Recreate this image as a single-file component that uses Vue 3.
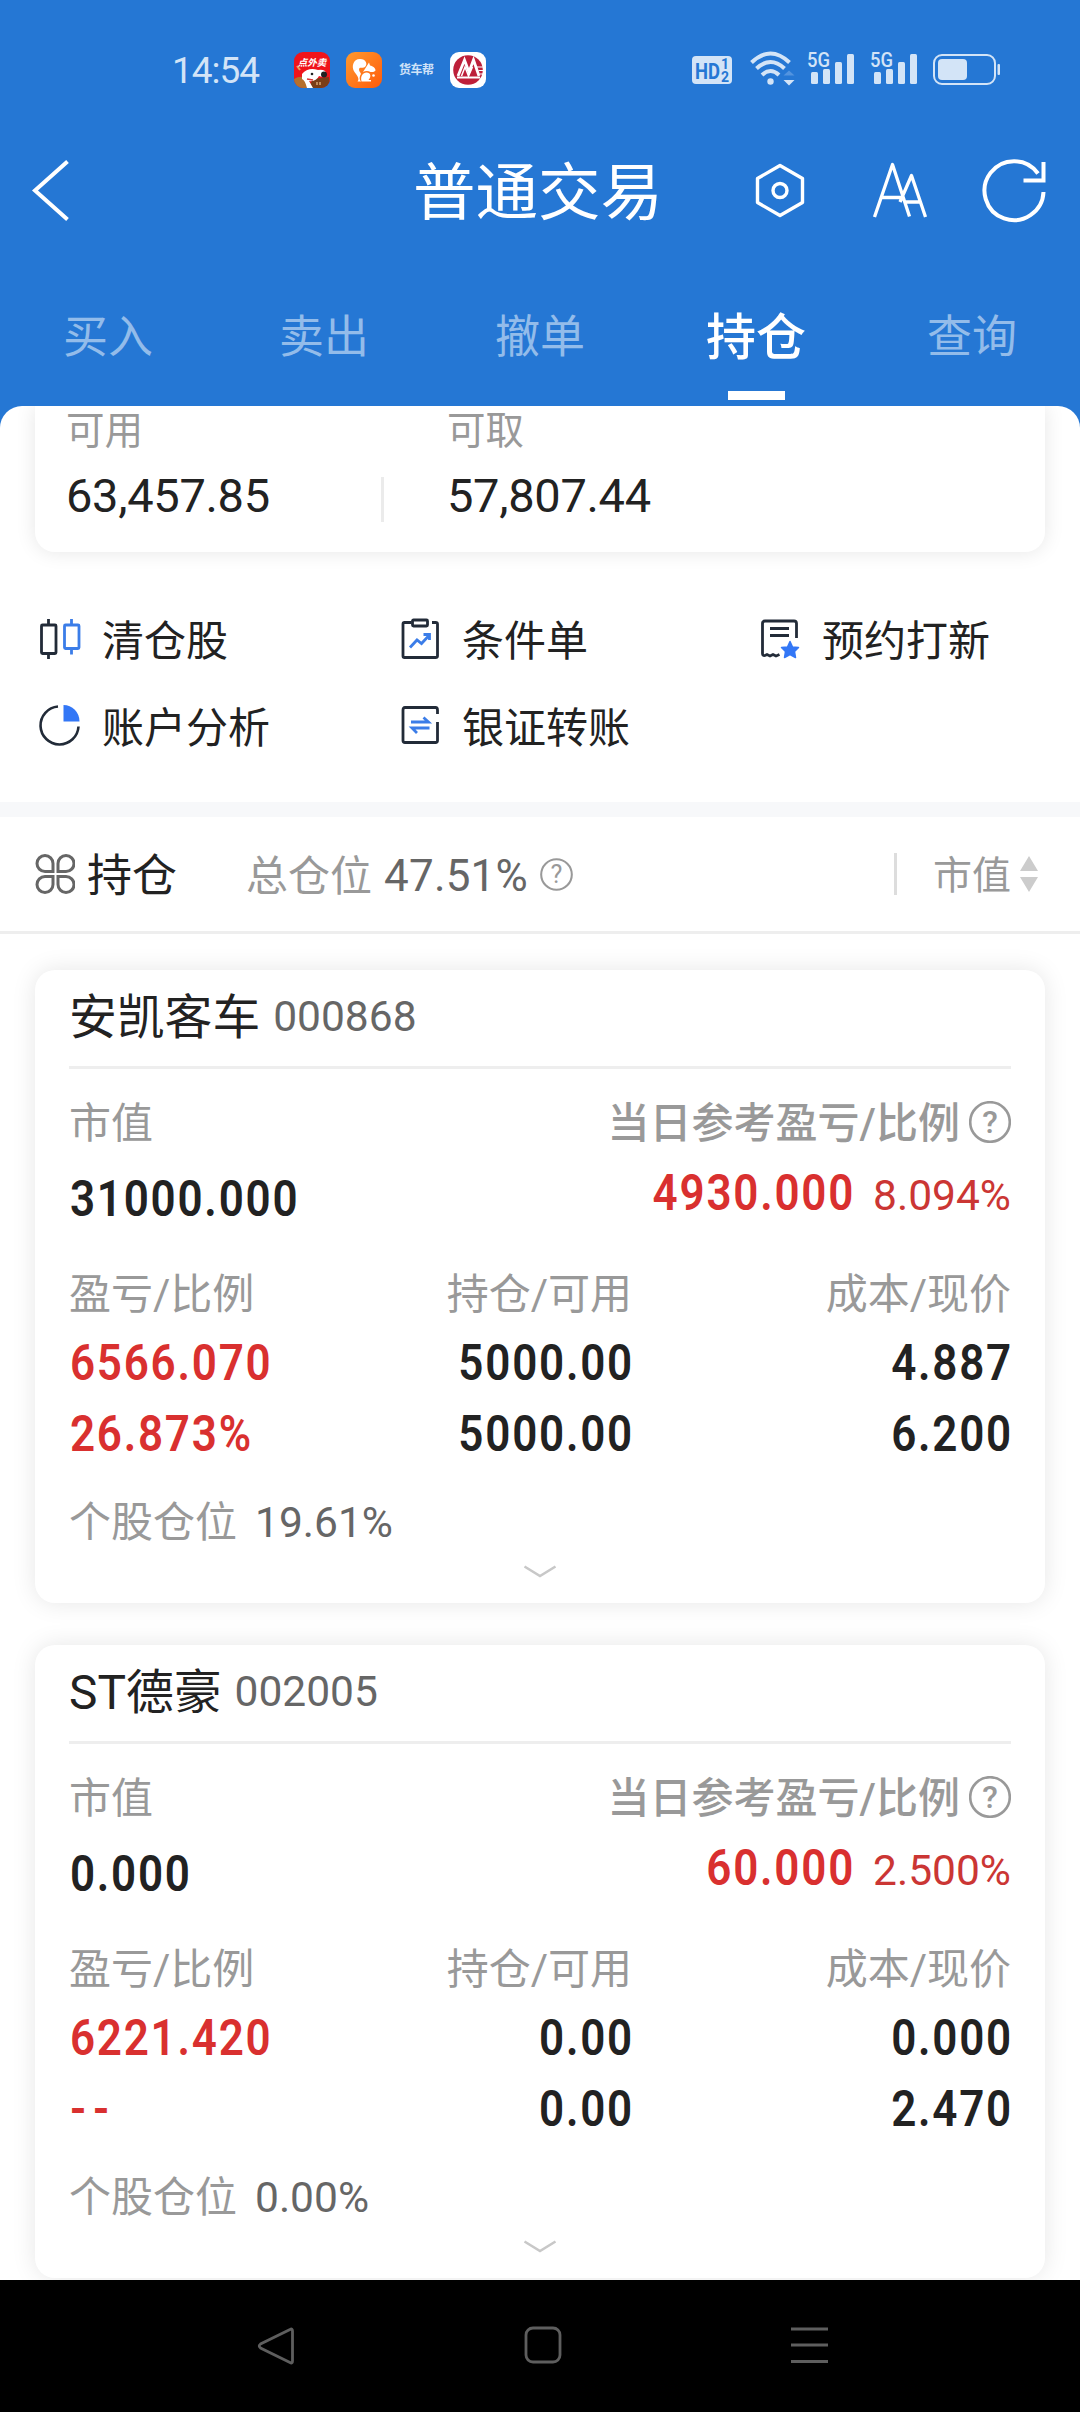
<script setup>
const tabs = ['买入', '卖出', '撤单', '持仓', '查询']
const activeTab = '持仓'

const tools = [
  { name: '清仓股', icon: 'candle' },
  { name: '条件单', icon: 'clipboard' },
  { name: '预约打新', icon: 'reserve' },
  { name: '账户分析', icon: 'pie' },
  { name: '银证转账', icon: 'transfer' },
]

const holdings = [
  {
    name: '安凯客车', code: '000868', value: '31000.000',
    day: '4930.000', dayRate: '8.094%',
    profit: '6566.070', profitRate: '26.873%',
    amount: '5000.00', usable: '5000.00',
    cost: '4.887', price: '6.200', weight: '19.61%',
  },
  {
    name: 'ST德豪', code: '002005', value: '0.000',
    day: '60.000', dayRate: '2.500%',
    profit: '6221.420', profitRate: '--',
    amount: '0.00', usable: '0.00',
    cost: '0.000', price: '2.470', weight: '0.00%',
  },
]
</script>

<template>
  <div class="screen">
    <header class="top">
      <div class="status">
        <span class="clock">14:54</span>
        <div class="apps">
          <svg width="36" height="36" viewBox="0 0 36 36">
            <defs><clipPath id="jd"><rect width="36" height="36" rx="9" /></clipPath></defs>
            <g clip-path="url(#jd)">
              <rect width="36" height="36" fill="#f0141b" />
              <path d="M0 27Q8 22 14 28L20 36H0Z" fill="#b5702c" />
              <path d="M18 27L35 25L36 36H16Z" fill="#7a3d17" />
              <path d="M3 14l3 4" stroke="#e9a25c" stroke-width="2" />
              <path d="M8 22Q14 15 24 18Q32 17 32 22Q30 26 25 24Q22 30 15 29L19 36H13Q11 28 8 27Z" fill="#fff" />
              <circle cx="30" cy="22.500" r="3" fill="#222" />
              <circle cx="18" cy="22" r="1.300" fill="#222" />
              <path d="M13 27l6 1" stroke="#d33" stroke-width="1.500" />
              <path d="M23 30v3M26 30v3" stroke="#efc08a" stroke-width="1.200" />
              <text x="18" y="13.500" text-anchor="middle" class="tiny">点外卖</text>
            </g>
          </svg>
          <svg width="36" height="36" viewBox="0 0 36 36">
            <defs><linearGradient id="uc" x1="0" y1="0" x2="1" y2="1"><stop offset="0" stop-color="#ff9a2e" /><stop offset="1" stop-color="#ff5a0a" /></linearGradient></defs>
            <rect width="36" height="36" rx="9" fill="url(#uc)" />
            <path d="M11.500 29.500C14 27 11 23 8.500 20C5 15 7 7 14 7C20 7 22 12 19 15C17 16.500 15 15 13.500 16C12 18.500 14.500 20 15 22C13 25 13.500 28 15 29.500Z" fill="#fff" />
            <path d="M17 20L23 10.500L24 13.500C27 14 29.500 16 29.500 18.500C28 20.500 26 20 24.500 20C22 18.500 19 19 17 20Z" fill="#fff" />
            <path d="M15.500 29.500C14 24 17 20.500 20.500 20.500C25 20.500 25.500 25 22.500 28H25V29.500Z" fill="#fff" />
            <circle cx="27.500" cy="23.500" r="1.300" fill="#fff" />
          </svg>
          <span class="truck">货车帮</span>
          <svg width="36" height="36" viewBox="0 0 36 36">
            <rect width="36" height="36" rx="9" fill="#fff" />
            <circle cx="18" cy="18" r="14.800" fill="#bd1f3a" />
            <path d="M8 24L14.500 8L19 20L23.500 8L29 24" fill="none" stroke="#fff" stroke-width="2.800" />
            <path d="M11.500 24L15 15L18.500 24L22.500 15" fill="none" stroke="#fff" stroke-width="1.500" />
            <path d="M7 25.500H30" stroke="#fff" stroke-width="2" />
            <path d="M27 15h7M28.500 18.500h6M29.500 22h5" stroke="#fff" stroke-width="1.200" />
          </svg>
        </div>
        <svg class="signals" width="312" height="40" viewBox="690 48 312 40" fill="#d3e4f7">
          <rect x="692" y="56" width="40" height="28" rx="4" />
          <text x="695" y="78.500" class="hd" textLength="25" lengthAdjust="spacingAndGlyphs">HD</text>
          <text x="721" y="68.500" class="hdn">1</text>
          <text x="721" y="81.500" class="hdn">2</text>
          <g fill="none" stroke="#d3e4f7" stroke-width="4">
            <path d="M751.500 62.500Q770.500 44.500 789.500 62.500" />
            <path d="M756.500 68.500Q770.500 55.500 784.500 68.500" />
            <path d="M762 75Q770.500 67 779 75" />
          </g>
          <circle cx="770.500" cy="81.500" r="3.200" />
          <path d="M783.500 75.500L789 70.500L794.500 75.500Z" fill="#5394df" />
          <path d="M783.500 80L794.500 80L789 85.500Z" />
          <g v-for="x in [807.500, 870.500]" :key="x" :transform="`translate(${x} 0)`">
            <text x="-0.500" y="67" class="fiveg" textLength="23" lengthAdjust="spacingAndGlyphs">5G</text>
            <rect x="3.500" y="72" width="7" height="12" rx="1.500" />
            <rect x="15.500" y="69" width="7" height="15" rx="1.500" />
            <rect x="27.500" y="62" width="7" height="22" rx="1.500" />
            <rect x="39.500" y="54" width="7" height="30" rx="1.500" />
          </g>
          <rect x="934" y="55" width="61" height="29" rx="8" fill="none" stroke="#d3e4f7" stroke-width="2" />
          <rect x="938" y="59" width="29" height="21" rx="4" />
          <rect x="997.500" y="64" width="2.500" height="11" rx="1" />
        </svg>
      </div>

      <div class="titlebar">
        <svg width="40" height="64" viewBox="30 158 40 64" fill="none" stroke="#fff" stroke-width="4"><path d="M67.500 161.500L35 190.500L67.500 219.500" /></svg>
        <h1>普通交易</h1>
        <svg class="actions" width="300" height="70" viewBox="750 155 300 70" fill="none" stroke="#fff" stroke-width="3.400">
          <path d="M780 165.500L802.500 178.500V202.500L780 215.500L757.500 202.500V178.500Z" stroke-linejoin="round" />
          <circle cx="780" cy="190.500" r="7" />
          <path d="M874.500 217L892.500 164.500L909.500 216.500M881 197.500H903M900 202L911.500 175.500L925.500 217M906 202H920.500" stroke-width="3.300" stroke-linejoin="round" />
          <path d="M1043.500 192A29.500 29.500 0 1 1 1038 173.500" stroke-width="4" />
          <path d="M1043.500 162V180.500H1023.500" stroke-width="4" />
        </svg>
      </div>

      <nav class="tabs">
        <span v-for="t in tabs" :key="t" class="tab" :class="{ on: t === activeTab }">{{ t }}</span>
      </nav>
    </header>

    <main class="sheet">
      <section class="funds">
        <div class="fund">
          <label>可用</label>
          <b>63,457.85</b>
        </div>
        <i class="rule"></i>
        <div class="fund">
          <label>可取</label>
          <b>57,807.44</b>
        </div>
      </section>

      <section class="tools">
        <div v-for="t in tools" :key="t.name" class="tool">
          <svg width="44" height="44" viewBox="0 0 44 44" fill="none" stroke="#222b38" stroke-width="2.800">
            <template v-if="t.icon === 'candle'">
              <path d="M10.500 2V8M10.500 36V42" /><rect x="3.500" y="8" width="14.500" height="28.500" rx="1" />
              <g stroke="#3b7de8"><path d="M33.500 2V8M33.500 31V37.500" /><rect x="26.500" y="8" width="14.500" height="23.500" rx="1" /></g>
            </template>
            <template v-else-if="t.icon === 'clipboard'">
              <path d="M13.500 5.500H6.500Q5 5.500 5 7V39Q5 40.500 6.500 40.500H37.500Q39.500 40.500 39.500 39V7Q39.500 5.500 37.500 5.500H34" />
              <rect x="14.500" y="3" width="15" height="6" rx="1" />
              <path d="M12 30.500L19 23L23.500 26.500L31 18.500M25.500 17.500H31.500V23" stroke="#3b7de8" />
            </template>
            <template v-else-if="t.icon === 'reserve'">
              <path d="M38.500 21V6.500Q38.500 4 36 4H7Q4.500 4 4.500 6.500V36.500Q4.500 39 7 38.500L9 37.500L12 39L15 37.500L18 39L21.500 37.500" />
              <path d="M12 11.500H31M12 18.500H31" />
              <path d="M32 24.500L34.500 30L40.500 30.500L36.500 34.500L37.500 40.500L32 37.500L26.500 40.500L27.500 34.500L23.500 30.500L29.500 30Z" fill="#3377f6" stroke="#3377f6" stroke-width="1.500" stroke-linejoin="round" />
            </template>
            <template v-else-if="t.icon === 'pie'">
              <path d="M20 2.500A19 19 0 1 0 40.500 22.500" stroke-width="2.600" />
              <path d="M25.500 1A16 16.500 0 0 1 41.500 17.500H25.500Z" fill="#3377f6" stroke="none" />
            </template>
            <template v-else>
              <path d="M39.500 10V6Q39.500 3.500 37.500 3.500H7Q5 3.500 5 6V36.500Q5 38.500 7 38.500H37.500Q39.500 38.500 39.500 36.500V18" />
              <path d="M13 18H30.500L25.500 13.500M31.500 24H14L19 29" stroke="#3b7de8" />
            </template>
          </svg>
          <span>{{ t.name }}</span>
        </div>
      </section>

      <section class="filter">
        <svg width="40" height="40" viewBox="0 0 40 40" fill="none" stroke="#666" stroke-width="3">
          <path d="M18 17.500H10A8 8 0 1 1 18 9.500ZM23 17.500V9.500A8 8 0 1 1 31 17.500ZM18 22.500V30.500A8 8 0 1 1 10 22.500ZM23 22.500H31A8 8 0 1 1 23 30.500Z" />
        </svg>
        <h2>持仓</h2>
        <span class="total">总仓位</span>
        <span class="rate">47.51%</span>
        <svg class="help" width="33" height="33" viewBox="0 0 42 42"><circle cx="21" cy="21" r="19.500" /><text x="21" y="32" text-anchor="middle">?</text></svg>
        <i class="rule"></i>
        <span class="sort">市值</span>
        <svg width="18" height="38" viewBox="0 0 18 38" fill="#ccc"><path d="M9 1L18 16H0ZM0 22H18L9 37Z" /></svg>
      </section>

      <section class="list">
        <article v-for="h in holdings" :key="h.code" class="card">
          <div class="head"><span class="name">{{ h.name }}</span><span class="code">{{ h.code }}</span></div>
          <div class="row first">
            <span class="cap">市值</span>
            <span class="cap strong">当日参考盈亏/比例<svg class="help" width="42" height="42" viewBox="0 0 42 42"><circle cx="21" cy="21" r="19.800" /><text x="21" y="32" text-anchor="middle">?</text></svg></span>
          </div>
          <div class="row worth">
            <span class="num start">{{ h.value }}</span>
            <span class="day red"><span class="num">{{ h.day }}</span><span class="pct">{{ h.dayRate }}</span></span>
          </div>
          <div class="grid">
            <span class="cap">盈亏/比例</span><span class="cap">持仓/可用</span><span class="cap">成本/现价</span>
            <span class="num start red">{{ h.profit }}</span><span class="num">{{ h.amount }}</span><span class="num">{{ h.cost }}</span>
            <span class="num start red" :class="{ dash: h.profitRate === '--' }">{{ h.profitRate }}</span><span class="num">{{ h.usable }}</span><span class="num">{{ h.price }}</span>
          </div>
          <div class="share"><span class="cap">个股仓位</span><span class="small">{{ h.weight }}</span></div>
          <svg class="more" width="34" height="14" viewBox="0 0 34 14" fill="none" stroke="#c8c8c8" stroke-width="2.600"><path d="M1.500 1.500L17 11L32.500 1.500" /></svg>
        </article>
      </section>
    </main>

    <footer class="nav">
      <svg width="38" height="40" viewBox="0 0 38 40"><path d="M33 3.500Q35.500 2 35.500 5V35Q35.500 38 33 36.500L3.500 22Q1 20 3.500 18Z" /></svg>
      <svg width="38" height="38" viewBox="0 0 38 38"><rect x="2" y="2" width="34" height="34" rx="7" /></svg>
      <svg width="38" height="38" viewBox="0 0 38 38"><path d="M1 3H38M1 19H38M1 35.500H38" /></svg>
    </footer>
  </div>
</template>

<style>
body { margin: 0; background: #fff; }
</style>

<style scoped>
.screen {
  width: 1080px;
  height: 2412px;
  display: flex;
  flex-direction: column;
  overflow: hidden;
  background: #2577d4;
  font-family: Roboto, "Noto Sans CJK SC", sans-serif;
  color: #222;
}
svg { display: block; flex: none; }
h1, h2 { margin: 0; font-weight: 400; }

.top { height: 406px; flex: none; color: #fff; }
.status { height: 92px; padding-top: 48px; box-sizing: border-box; display: flex; align-items: flex-start; }
.clock { width: 122px; margin-left: 172px; font-size: 37px; line-height: 46px; letter-spacing: -1px; color: #d3e4f7; }
.apps { display: flex; align-items: center; margin-top: 4px; width: 396px; }
.apps svg + svg { margin-left: 16px; }
.truck { width: 34px; margin: 0 17px 0 17px; font-size: 12px; line-height: 16px; font-weight: 700; white-space: nowrap; color: #cfe2f8; letter-spacing: -0.5px; }
.tiny { font-size: 9.5px; font-weight: 700; font-style: italic; fill: #fff; }
.hd { font-size: 22px; font-weight: 700; fill: #2577d4; }
.hdn { font-size: 14px; font-weight: 700; fill: #2577d4; }
.fiveg { font-size: 20px; font-weight: 500; }

.titlebar { height: 196px; display: flex; align-items: center; padding: 0 30px; }
.titlebar h1 { flex: 1; padding-left: 343px; font-size: 62.5px; line-height: 80px; margin-top: 8px; }

.tabs { display: flex; height: 118px; }
.tab { width: 216px; height: 112px; line-height: 100px; font-size: 45px; color: #93bcea; display: flex; flex-direction: column; align-items: center; }
.tab.on { font-size: 50px; font-weight: 500; color: #fff; }
.tab.on::after { content: ""; width: 57px; height: 9px; margin-top: 3px; background: #fff; }

.sheet { height: 1874px; flex: none; overflow: hidden; background: #fff; border-radius: 22px 22px 0 0; }
.funds { height: 146px; margin: 0 35px; border-radius: 0 0 20px 20px; box-shadow: 0 0 20px rgba(0, 0, 0, 0.1); display: flex; padding-left: 31px; }
.fund { width: 315px; display: flex; flex-direction: column; }
.fund label { font-size: 38.5px; line-height: 50px; color: #999; }
.fund b { font-size: 47px; line-height: 79px; font-weight: 400; letter-spacing: -0.3px; }
.funds .rule { width: 3px; height: 45px; margin: 71px 63px 0 0; background: #ebebeb; }

.tools { height: 265px; padding: 44px 0 0 38px; box-sizing: border-box; display: flex; flex-wrap: wrap; align-content: flex-start; width: 1118px; border-bottom: 15px solid #f7f8fa; }
.tool { width: 360px; height: 87px; display: flex; align-items: center; font-size: 42px; }
.tool svg { margin: -2px 20px 0 0; }
.tool span { line-height: 60px; margin-top: 4px; }

.filter { height: 117px; border-bottom: 3px solid #eee; box-sizing: border-box; padding: 0 42px 0 35px; display: flex; align-items: center; color: #999; }
.filter h2 { font-size: 45px; line-height: 60px; margin: 5px 0 0 12px; color: #222; }
.total { font-size: 42px; line-height: 60px; margin: 5px 0 0 69px; }
.rate { font-size: 44px; line-height: 60px; margin: 3px 0 0 12px; color: #666; letter-spacing: 0.2px; }
.filter .help { margin-left: 12px; }
.filter .rule { width: 3px; height: 42px; background: #ddd; margin-left: auto; }
.sort { font-size: 39px; line-height: 60px; margin: 4px 9px 0 36px; }
.help circle { fill: none; stroke: #999; stroke-width: 2.6; }
.help text { font-size: 32px; fill: #999; }

.list { padding: 36px 35px 0; display: flex; flex-direction: column; gap: 42px; }
.card { height: 633px; border-radius: 20px; box-shadow: 0 0 24px rgba(0, 0, 0, 0.1); box-sizing: border-box; padding: 0 34px; background: #fff; flex: none; }
.head { height: 96px; display: flex; line-height: 97px; border-bottom: 3px solid #eee; }
.name { font-size: 47.8px; }
.code { font-size: 42.5px; line-height: 94px; color: #666; margin-left: 13px; }
.row { display: flex; justify-content: space-between; align-items: center; height: 60px; }
.first { margin-top: 25px; }
.cap { font-size: 42px; line-height: 60px; color: #999; }
.strong { display: flex; align-items: center; font-weight: 500; }
.strong .help { margin: -5px 0 0 9px; }
.worth { margin-top: 15px; }
.num { font-size: 50px; font-weight: 600; letter-spacing: 2px; margin-right: -2px; line-height: 60px; transform: scaleX(0.88); transform-origin: right center; }
.num.start { transform-origin: left center; padding-left: 1px; }
.red { color: #d9302f; }
.day { display: flex; align-items: baseline; padding-bottom: 12px; }
.pct { font-size: 42.5px; margin-left: 20px; color: #cb3634; }
.grid { display: grid; grid-template-columns: 250px 313px 379px; grid-template-rows: 62px 71px 71px; align-items: center; margin-top: 36px; }
.grid > * { text-align: right; }
.grid > .cap { margin-top: -2px; }
.grid > :nth-child(3n + 1) { text-align: left; }
.num.dash { letter-spacing: 8px; }
.share { height: 60px; margin-top: 24px; line-height: 60px; }
.small { font-size: 42.5px; color: #666; margin-left: 18px; }
.more { margin: 12px auto 0; }

.nav { height: 132px; flex: none; background: #000; padding: 46px 252px 0 257px; display: flex; justify-content: space-between; align-items: flex-start; }
.nav svg { fill: none; stroke: #5e5e5e; stroke-width: 2.8; }
</style>
